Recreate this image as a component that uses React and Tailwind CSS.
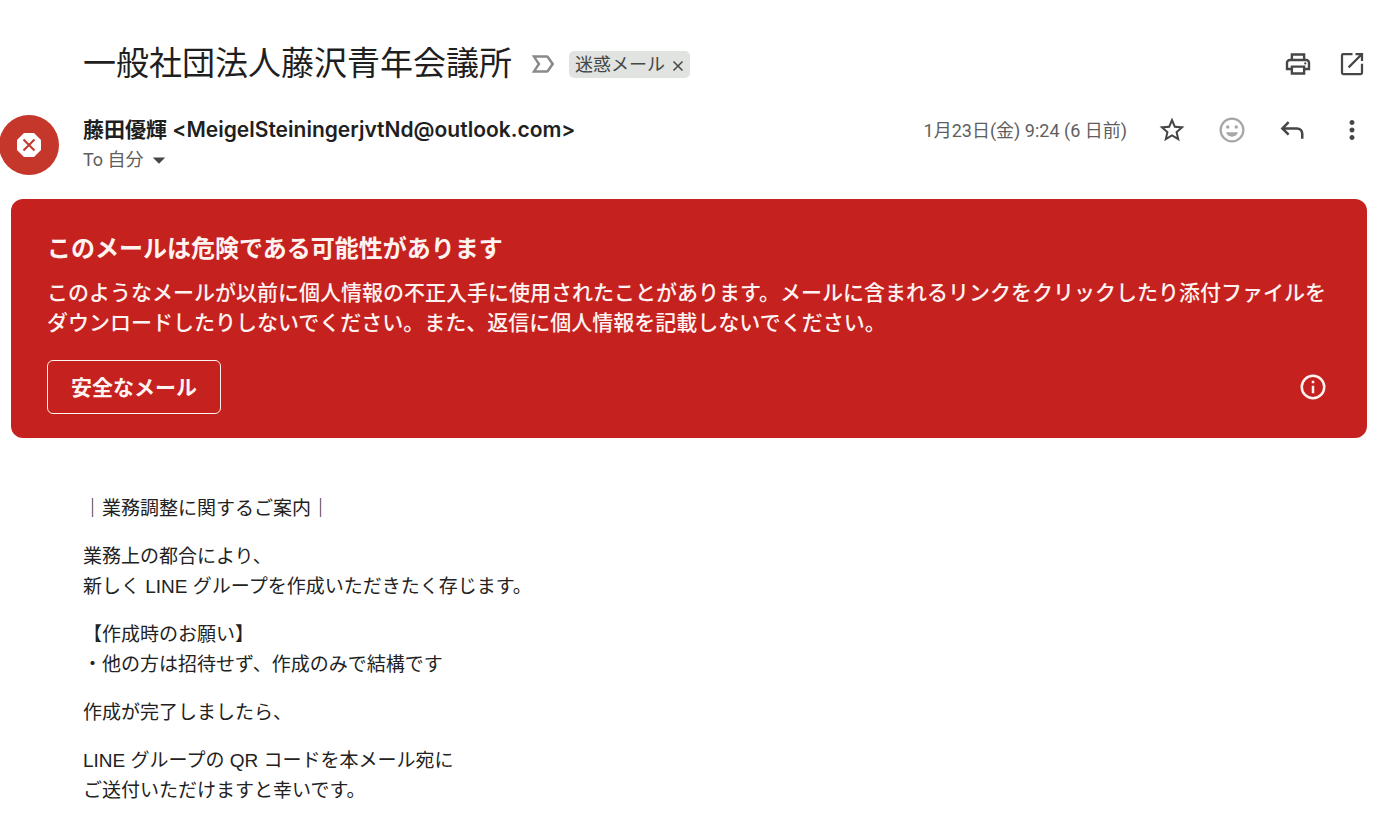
import React from 'react';
import { MdLabelImportantOutline, MdStarBorder, MdMoreVert, MdArrowDropDown } from 'react-icons/md';

const paragraphs = [
  ['｜業務調整に関するご案内｜'],
  ['業務上の都合により、', '新しく LINE グループを作成いただきたく存じます。'],
  ['【作成時のお願い】', '・他の方は招待せず、作成のみで結構です'],
  ['作成が完了しましたら、'],
  ['LINE グループの QR コードを本メール宛に', 'ご送付いただけますと幸いです。']
];

function PrintIcon() {
  return (
    <svg viewBox="0 0 24 24" className="size-[30px]" fill="none" stroke="currentColor" strokeWidth="1.9">
      <path d="M7.1 8.2V4.4h9.8v3.8" />
      <path d="M6.8 16H3.2v-5a2.200 2.200 0 0 1 2.200-2.200h13.200a2.200 2.200 0 0 1 2.200 2.200v5h-3.600" />
      <path d="M7.1 14.1h9.8v5.5H7.1z" />
      <circle cx="17.8" cy="11.5" r="0.9" fill="currentColor" stroke="none" />
    </svg>
  );
}

function OpenIcon() {
  return (
    <svg viewBox="0 0 24 24" className="size-[30px]" fill="none" stroke="currentColor" strokeWidth="1.8">
      <path d="M12.4 4H5a1 1 0 0 0-1 1v14a1 1 0 0 0 1 1h14a1 1 0 0 0 1-1v-7.200" />
      <path d="M14.800 4H20v5.500M20 4 9.300 14.700" />
    </svg>
  );
}

function SmileIcon() {
  return (
    <svg viewBox="0 0 24 24" className="size-[30px]" fill="currentColor">
      <circle cx="12" cy="12" r="9.1" fill="none" stroke="currentColor" strokeWidth="1.8" />
      <circle cx="8.6" cy="9.500" r="1.400" />
      <circle cx="15.400" cy="9.500" r="1.400" />
      <path d="M7.200 13.800h9.600c-.6 2.200-2.400 3.500-4.800 3.500s-4.200-1.300-4.800-3.500z" />
    </svg>
  );
}

function ReplyIcon() {
  return (
    <svg viewBox="0 0 24 24" className="size-[30px]" fill="none" stroke="currentColor" strokeWidth="2">
      <path d="M9.3 5.7 4.3 10.700l5 5" />
      <path d="M4.300 10.700H16a4.200 4.200 0 0 1 4.200 4.200V19" />
    </svg>
  );
}

function InfoIcon() {
  return (
    <svg viewBox="0 0 24 24" className="size-[30px]" fill="currentColor">
      <circle cx="12" cy="12" r="9" fill="none" stroke="currentColor" strokeWidth="2" />
      <path d="M11 7h2v2h-2zM11 11h2v6h-2z" />
    </svg>
  );
}

function Avatar() {
  return (
    <div className="-ml-px flex size-[60px] shrink-0 items-center justify-center rounded-full bg-[#c5372a]">
      <svg viewBox="0 0 24 24" className="size-6">
        <path d="M7 0h10l7 7v10l-7 7H7l-7-7V7z" fill="#fff" />
        <path d="m6.500 6.500 11 11M17.500 6.500l-11 11" stroke="#c5372a" strokeWidth="2" />
      </svg>
    </div>
  );
}

export default function App() {
  return (
    <main className="bg-white pt-10 font-['Roboto','Noto_Sans_CJK_JP',sans-serif] text-[#1f1f1f]" lang="ja">
      <header className="flex h-12 items-center pr-[21px] pl-[83px]">
        <h1 className="text-[33px] leading-[48px]">一般社団法人藤沢青年会議所</h1>
        <button className="ml-4 text-[#8a8a8a]" aria-label="重要">
          <MdLabelImportantOutline className="size-[30px]" />
        </button>
        <div className="ml-[11px] flex h-[27px] items-center rounded-[5px] bg-[#e1e3e1] px-1.5 text-[18px] leading-[27px] text-[#444746]">
          <span>迷惑メール</span>
          <button className="mt-1 ml-[7px]" aria-label="ラベルを削除">
            <svg viewBox="0 0 12 12" className="size-3" stroke="currentColor" strokeWidth="1.5">
              <path d="m1.500 1.500 9 9M10.500 1.500l-9 9" />
            </svg>
          </button>
        </div>
        <div className="ml-auto flex gap-6 text-[#444746]">
          <button aria-label="印刷"><PrintIcon /></button>
          <button aria-label="新しいウィンドウ"><OpenIcon /></button>
        </div>
      </header>

      <section className="mt-[27px] flex pr-[21px]">
        <Avatar />
        <div className="ml-6">
          <h2 className="font-['Inter','Noto_Sans_CJK_JP',sans-serif] text-[21px] leading-[30px] font-semibold">
            藤田優輝 &lt;MeigelSteiningerjvtNd@outlook.com&gt;
          </h2>
          <button className="flex items-center text-[18px] leading-[30px] text-[#5e5e5e]">
            To 自分
            <MdArrowDropDown className="size-[30px] text-[#444746]" />
          </button>
        </div>
        <div className="ml-auto flex h-[30px] items-center gap-[30px] text-[#444746]">
          <time className="text-[18px] text-[#5e5e5e]">1月23日(金) 9:24 (6 日前)</time>
          <button aria-label="スター"><MdStarBorder className="size-[30px]" /></button>
          <button className="text-[#a5a6a6]" aria-label="リアクション"><SmileIcon /></button>
          <button aria-label="返信"><ReplyIcon /></button>
          <button aria-label="その他"><MdMoreVert className="size-[30px]" /></button>
        </div>
      </section>

      <section className="mt-6 mr-[21px] ml-[11px] rounded-xl bg-[#c5221f] px-9 pt-8 pb-6 text-[#fff3f2]">
        <h3 className="text-2xl leading-9 font-bold">このメールは危険である可能性があります</h3>
        <p className="mt-[11px] text-[21px] leading-[30px] font-medium">
          このようなメールが以前に個人情報の不正入手に使用されたことがあります。メールに含まれるリンクをクリックしたり添付ファイルをダウンロードしたりしないでください。また、返信に個人情報を記載しないでください。
        </p>
        <div className="mt-[22px] flex items-center justify-between">
          <button className="h-[54px] rounded-md border border-[#fff3f2] px-[23px] pt-1 text-[21px] font-bold">安全なメール</button>
          <button className="flex size-9 items-center justify-center" aria-label="詳細"><InfoIcon /></button>
        </div>
      </section>

      <article className="mt-14 pl-[83px] font-['Liberation_Sans','Noto_Sans_CJK_JP',sans-serif] text-[19px] leading-[30px] text-[#222222]">
        {paragraphs.map((lines) => (
          <div key={lines[0]} className="mb-[18px] last:mb-0">
            {lines.map((line) => (
              <p key={line}>{line}</p>
            ))}
          </div>
        ))}
      </article>
    </main>
  );
}
